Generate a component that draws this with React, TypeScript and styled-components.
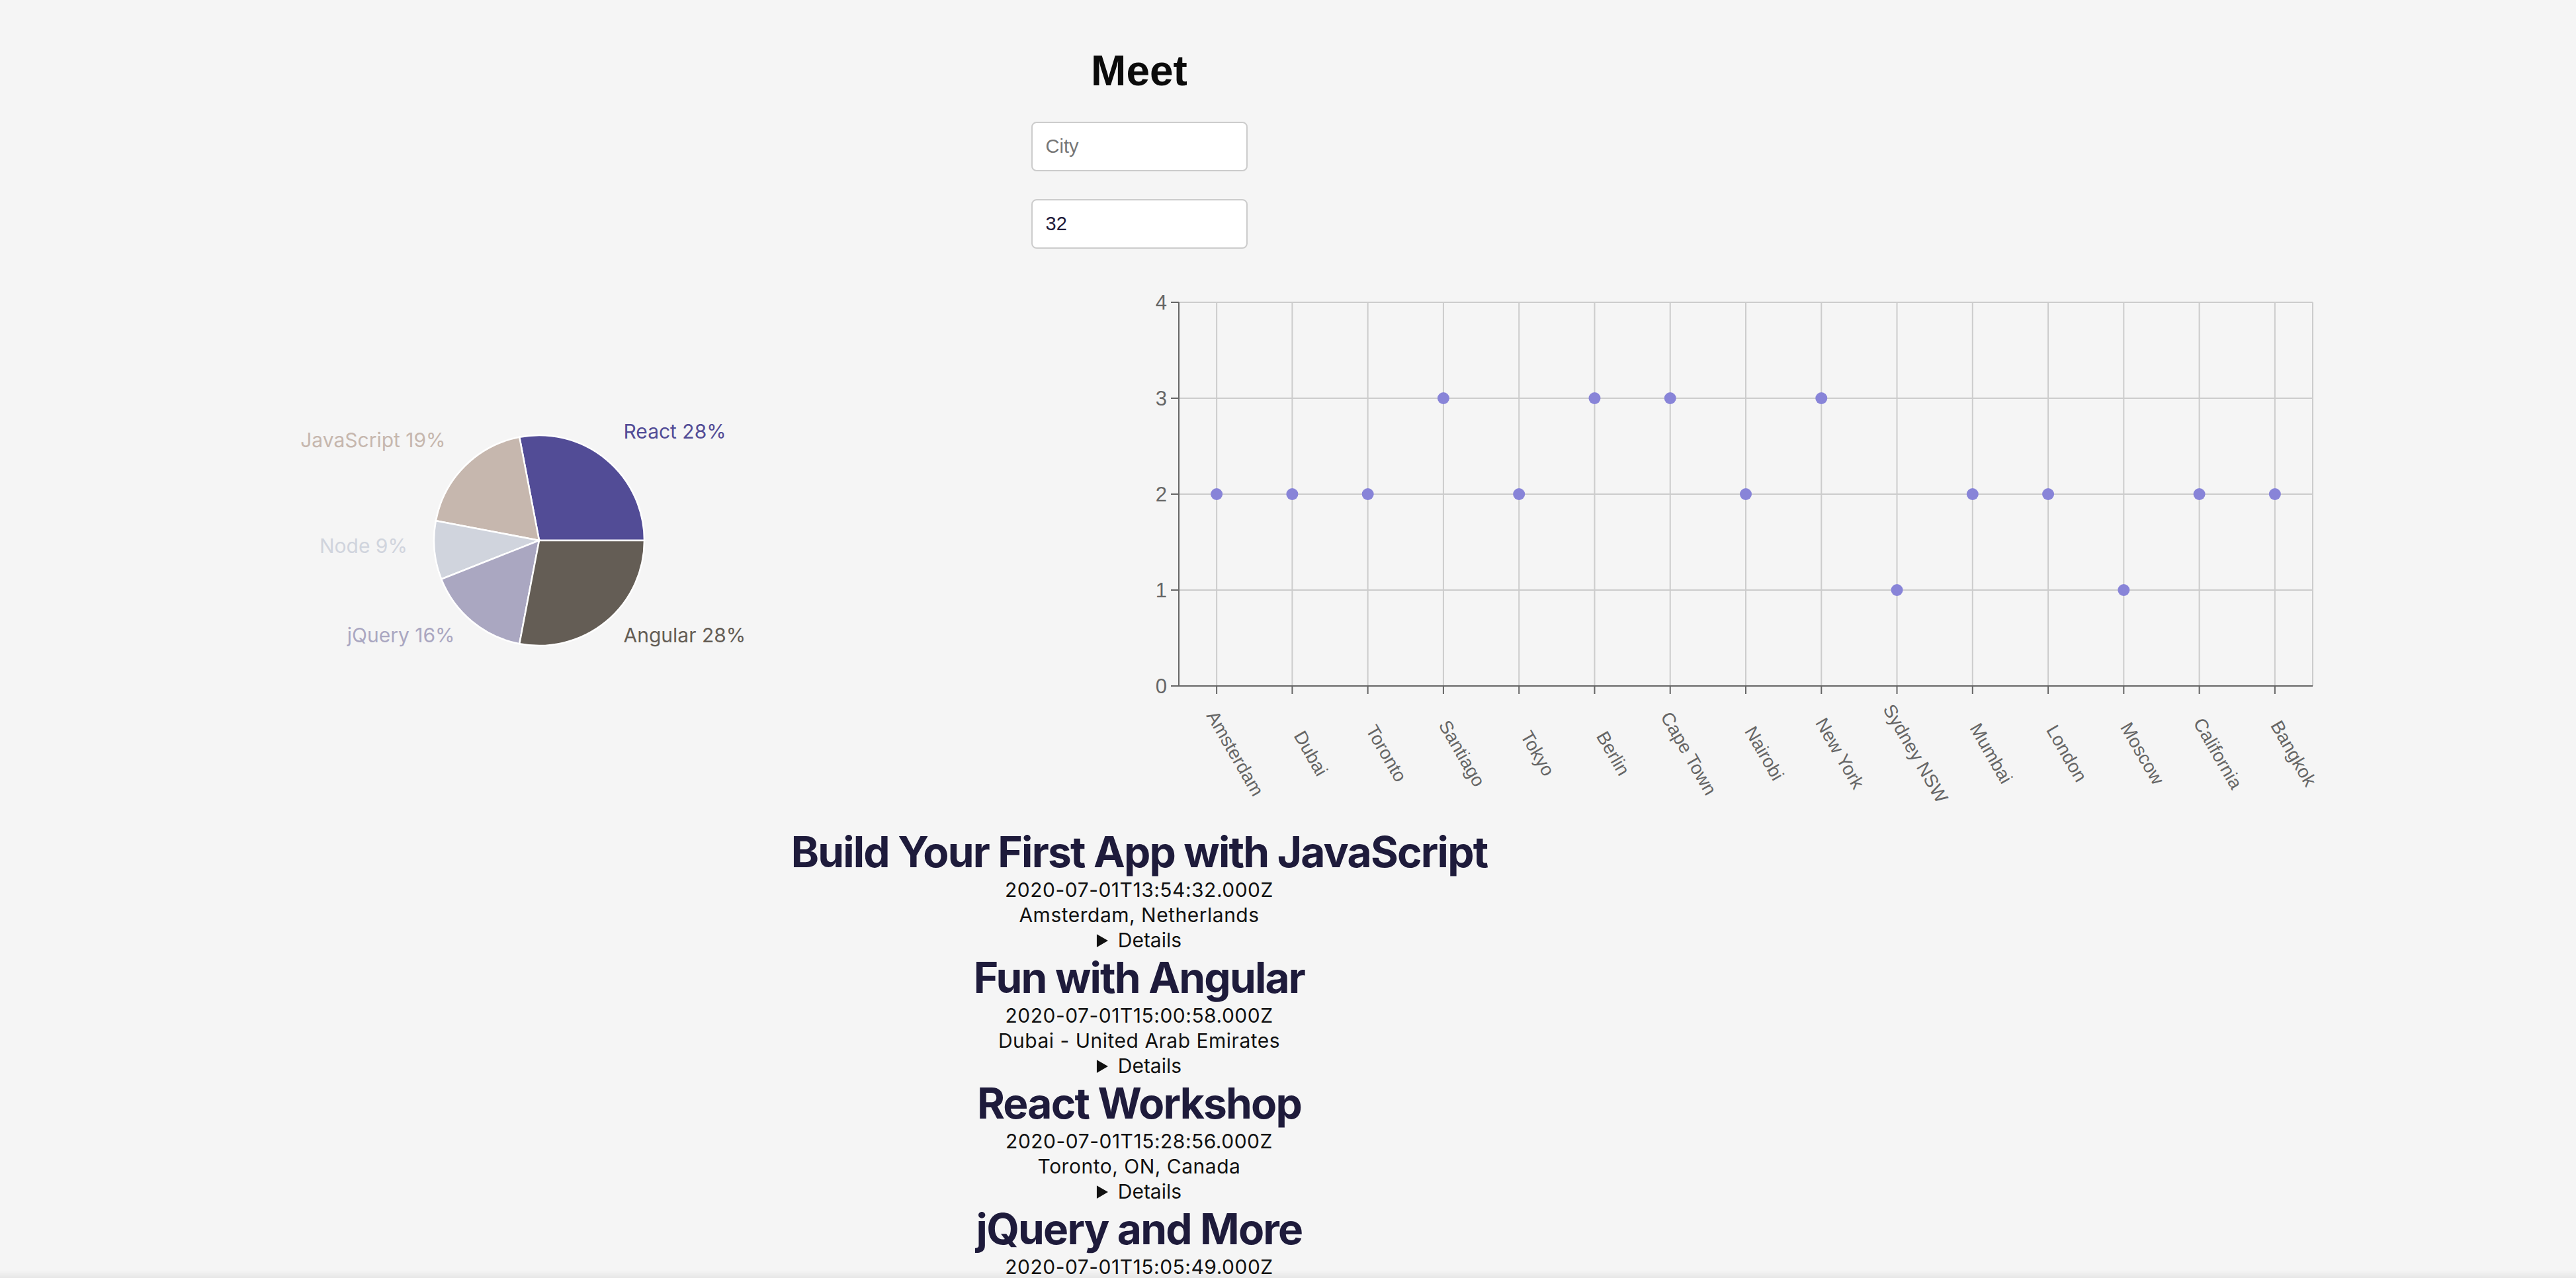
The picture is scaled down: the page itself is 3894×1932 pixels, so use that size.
import React from "react";
import styled, { createGlobalStyle } from "styled-components";

const GlobalStyle = createGlobalStyle`
  html, body {
    margin: 0;
    padding: 0;
    background: #f5f5f5;
  }
  body {
    font-family: Inter, "Noto Sans", "Liberation Sans", sans-serif;
    overflow: hidden;
  }
  * { box-sizing: border-box; }
`;

const Page = styled.div`
  width: 3444px;
  display: flex;
  flex-direction: column;
  align-items: center;
  text-align: center;
`;

const Title = styled.h1`
  margin: 70px 0 0;
  font-family: "Liberation Sans", Arial, sans-serif;
  font-weight: 700;
  font-size: 64px;
  line-height: 74px;
  color: #0b0b0b;
`;

const Field = styled.input<{ $gap: number }>`
  display: block;
  margin-top: ${(p) => p.$gap}px;
  width: 327px;
  height: 75px;
  padding: 0 20px;
  border: 2px solid #cccccc;
  border-radius: 8px;
  background: #ffffff;
  font-family: "Liberation Sans", Arial, sans-serif;
  font-size: 29px;
  color: #1f1b3a;
  outline: none;
  &::placeholder {
    color: #767676;
  }
`;

const ChartsRow = styled.div`
  align-self: flex-start;
  margin-top: 45px;
  display: flex;
  width: 3520px;
  height: 829px;
`;

const PieSvg = styled.svg`
  flex: 0 0 1700px;
  height: 829px;
  overflow: visible;
`;

const ScatterSvg = styled.svg`
  flex: 0 0 1820px;
  height: 829px;
  overflow: visible;
`;

const PieLabel = styled.text`
  font-family: Inter, "Noto Sans", sans-serif;
  font-size: 30px;
`;

const AxisLabel = styled.text`
  font-family: "Liberation Sans", Arial, sans-serif;
  fill: #666666;
`;

const EventList = styled.ul`
  list-style: none;
  margin: 0;
  padding: 0;
  width: 100%;
`;

const EventItem = styled.li`
  display: flex;
  flex-direction: column;
  align-items: center;
`;

const EventTitle = styled.h2`
  margin: 0;
  font-family: Inter, "Noto Sans", sans-serif;
  font-weight: 700;
  font-size: 64px;
  line-height: 76px;
  letter-spacing: -1.8px;
  color: #1e1b3b;
`;

const EventLine = styled.p`
  margin: 0;
  font-size: 30px;
  line-height: 38px;
  letter-spacing: 0.5px;
  color: #111111;
`;

const Details = styled.details`
  font-size: 30px;
  line-height: 38px;
  color: #111111;
  summary {
    cursor: pointer;
  }
`;

const BottomShade = styled.div`
  position: fixed;
  left: 0;
  right: 0;
  bottom: 0;
  height: 12px;
  background: linear-gradient(to bottom, rgba(0, 0, 0, 0), rgba(0, 0, 0, 0.06));
  pointer-events: none;
`;

const pieData = [
  { name: "React", value: 28, color: "#524c96" },
  { name: "JavaScript", value: 19, color: "#c6b7ae" },
  { name: "Node", value: 9, color: "#d0d4dd" },
  { name: "jQuery", value: 16, color: "#aaa7c1" },
  { name: "Angular", value: 28, color: "#645d55" },
];

const cityData: [string, number][] = [
  ["Amsterdam", 2],
  ["Dubai", 2],
  ["Toronto", 2],
  ["Santiago", 3],
  ["Tokyo", 2],
  ["Berlin", 3],
  ["Cape Town", 3],
  ["Nairobi", 2],
  ["New York", 3],
  ["Sydney NSW", 1],
  ["Mumbai", 2],
  ["London", 2],
  ["Moscow", 1],
  ["California", 2],
  ["Bangkok", 2],
];

const events = [
  { summary: "Build Your First App with JavaScript", start: "2020-07-01T13:54:32.000Z", location: "Amsterdam, Netherlands" },
  { summary: "Fun with Angular", start: "2020-07-01T15:00:58.000Z", location: "Dubai - United Arab Emirates" },
  { summary: "React Workshop", start: "2020-07-01T15:28:56.000Z", location: "Toronto, ON, Canada" },
  { summary: "jQuery and More", start: "2020-07-01T15:05:49.000Z", location: "Santiago, Chile" },
];

const PIE_CX = 815;
const PIE_CY = 396;
const PIE_R = 159;
const LABEL_R = 200;

function polar(r: number, deg: number) {
  const a = (deg * Math.PI) / 180;
  return { x: PIE_CX + r * Math.cos(a), y: PIE_CY - r * Math.sin(a) };
}

function PieChart() {
  const total = pieData.reduce((s, d) => s + d.value, 0);
  let acc = 0;
  return (
    <PieSvg viewBox="0 0 1700 829">
      {pieData.map((d) => {
        const a0 = (acc / total) * 360;
        acc += d.value;
        const a1 = (acc / total) * 360;
        const p0 = polar(PIE_R, a0);
        const p1 = polar(PIE_R, a1);
        const large = a1 - a0 > 180 ? 1 : 0;
        const mid = (a0 + a1) / 2;
        const lp = polar(LABEL_R, mid);
        const anchor = lp.x > PIE_CX ? "start" : "end";
        return (
          <g key={d.name}>
            <path
              d={`M${PIE_CX} ${PIE_CY} L${p0.x} ${p0.y} A${PIE_R} ${PIE_R} 0 ${large} 0 ${p1.x} ${p1.y} Z`}
              fill={d.color}
              stroke="#ffffff"
              strokeWidth={2.5}
            />
            <PieLabel x={lp.x} y={lp.y} textAnchor={anchor} fill={d.color}>
              {`${d.name} ${d.value}%`}
            </PieLabel>
          </g>
        );
      })}
    </PieSvg>
  );
}

const PL = 82;
const PR = 1796;
const PT = 36;
const PB = 616;

function ScatterChart() {
  const band = (PR - PL) / cityData.length;
  const yFor = (v: number) => PB - ((PB - PT) * v) / 4;
  const xs = cityData.map((_, i) => PL + band * (i + 0.5));
  return (
    <ScatterSvg viewBox="0 0 1820 829">
      {[0, 1, 2, 3, 4].map((v) => (
        <line key={`h${v}`} x1={PL} x2={PR} y1={yFor(v)} y2={yFor(v)} stroke="#cccccc" strokeWidth={2} />
      ))}
      {xs.map((x, i) => (
        <line key={`v${i}`} x1={x} x2={x} y1={PT} y2={PB} stroke="#cccccc" strokeWidth={2} />
      ))}
      <line x1={PR} x2={PR} y1={PT} y2={PB} stroke="#cccccc" strokeWidth={2} />
      <line x1={PL} x2={PL} y1={PT} y2={PB} stroke="#666666" strokeWidth={2} />
      <line x1={PL} x2={PR} y1={PB} y2={PB} stroke="#666666" strokeWidth={2} />
      {[0, 1, 2, 3, 4].map((v) => (
        <g key={`yt${v}`}>
          <line x1={PL - 12} x2={PL} y1={yFor(v)} y2={yFor(v)} stroke="#666666" strokeWidth={2} />
          <AxisLabel x={PL - 18} y={yFor(v)} textAnchor="end" dominantBaseline="central" fontSize={31}>
            {v}
          </AxisLabel>
        </g>
      ))}
      {xs.map((x, i) => {
        const lx = x + 28;
        const ly = 718;
        return (
          <g key={`xt${i}`}>
            <line x1={x} x2={x} y1={PB} y2={PB + 12} stroke="#666666" strokeWidth={2} />
            <AxisLabel
              x={lx}
              y={ly}
              textAnchor="middle"
              dominantBaseline="central"
              fontSize={28}
              transform={`rotate(60 ${lx} ${ly})`}
            >
              {cityData[i][0]}
            </AxisLabel>
          </g>
        );
      })}
      {xs.map((x, i) => (
        <circle key={`d${i}`} cx={x} cy={yFor(cityData[i][1])} r={9} fill="#8884d8" />
      ))}
    </ScatterSvg>
  );
}

export default function App() {
  return (
    <>
      <GlobalStyle />
      <Page>
        <Title>Meet</Title>
        <Field $gap={40} type="text" placeholder="City" />
        <Field $gap={42} type="number" defaultValue={32} />
        <ChartsRow>
          <PieChart />
          <ScatterChart />
        </ChartsRow>
        <EventList>
          {events.map((e) => (
            <EventItem key={e.start}>
              <EventTitle>{e.summary}</EventTitle>
              <EventLine>{e.start}</EventLine>
              <EventLine>{e.location}</EventLine>
              <Details>
                <summary>Details</summary>
              </Details>
            </EventItem>
          ))}
        </EventList>
      </Page>
      <BottomShade />
    </>
  );
}
